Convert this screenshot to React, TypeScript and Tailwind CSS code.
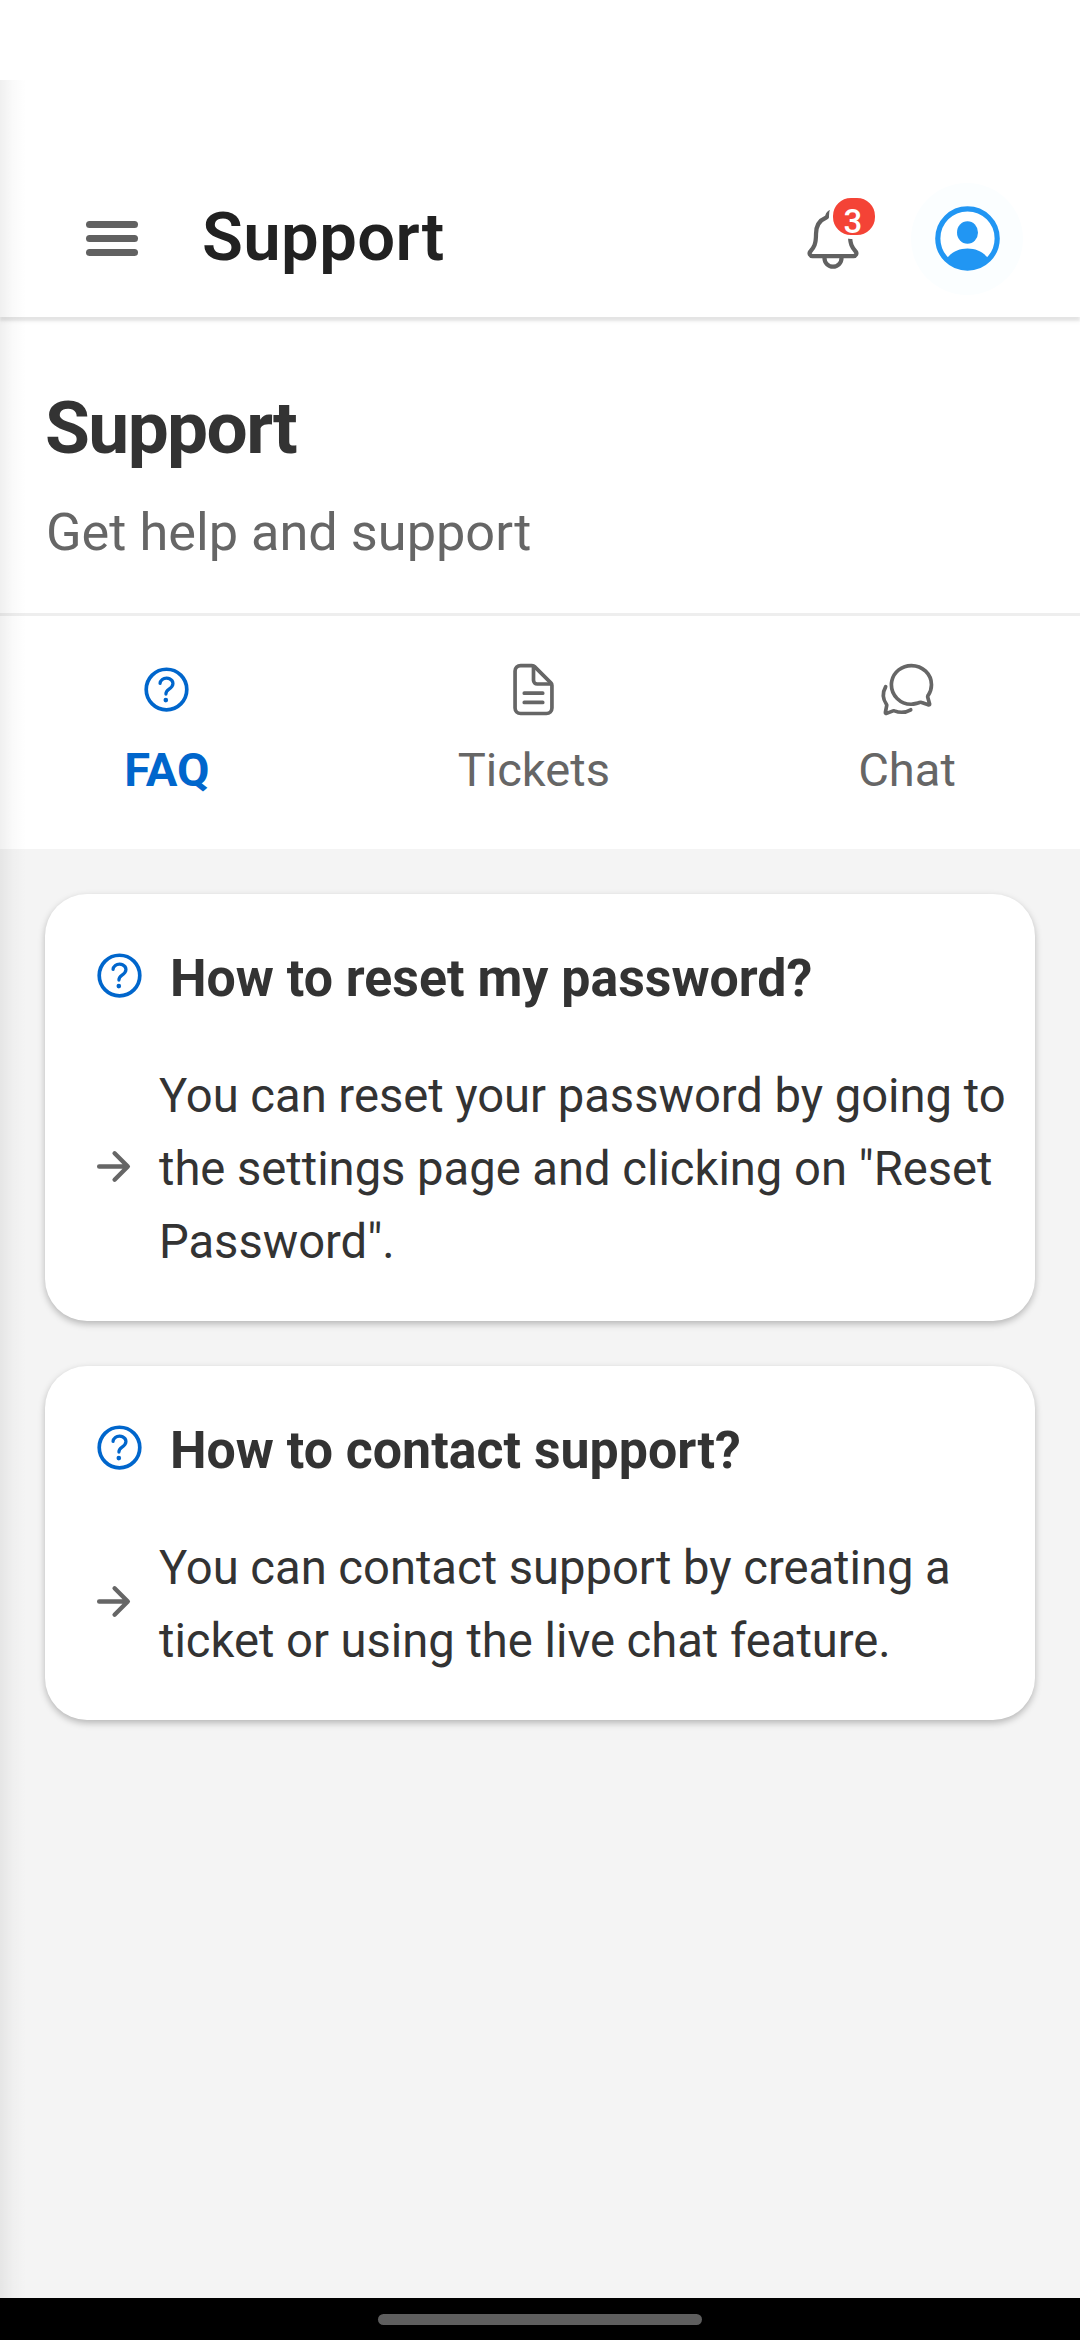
import type { ReactNode } from "react";
import {
  IoArrowForward,
  IoChatbubblesOutline,
  IoDocumentTextOutline,
  IoHelpCircleOutline,
  IoNotificationsOutline,
} from "react-icons/io5";

const faqs = [
  {
    question: "How to reset my password?",
    answer: 'You can reset your password by going to the settings page and clicking on "Reset Password".',
  },
  {
    question: "How to contact support?",
    answer: "You can contact support by creating a ticket or using the live chat feature.",
  },
];

function Tab({ icon, label, active = false }: { icon: ReactNode; label: string; active?: boolean }) {
  return (
    <button
      className={
        active
          ? "flex flex-col items-center gap-[21px] font-bold text-[#0066cc]"
          : "flex flex-col items-center gap-[21px] text-[#666666]"
      }
    >
      {icon}
      <span className="text-[47.1px] leading-[60px]">{label}</span>
    </button>
  );
}

function Header() {
  return (
    <header className="relative z-10 flex h-[237px] items-center bg-white pt-[80px] pl-[86px] pr-[57px] shadow-[0_4px_2px_rgba(0,0,0,0.07),0_5px_5px_rgba(0,0,0,0.04)]">
      <button aria-label="Menu" className="flex w-[52px] flex-col gap-[7px]">
        <span className="h-[6.7px] rounded-full bg-[#616161]" />
        <span className="h-[6.7px] rounded-full bg-[#616161]" />
        <span className="h-[6.7px] rounded-full bg-[#616161]" />
      </button>
      <h1 className="-mt-[3px] ml-[64px] flex-1 text-[67px] leading-[80px] font-semibold tracking-[0.4px] text-[#212121]">
        Support
      </h1>
      <div className="relative mt-px mr-[44px] size-[68px] text-[#616161]">
        <IoNotificationsOutline size={68} />
        <span className="absolute -top-[11px] left-[30px] flex h-[45px] w-[50px] items-center justify-center rounded-[22px] border-4 border-white bg-[#f44336] pt-[9px] pr-[2px] text-[33px] leading-none font-medium text-white">
          3
        </span>
      </div>
      <button aria-label="Profile" className="flex size-[112px] items-center justify-center rounded-full bg-[#fbfeff]">
        <svg width="65" height="65" viewBox="0 0 65 65" className="text-[#2196f3]">
          <circle cx="32.5" cy="32.5" r="29.7" fill="#fff" stroke="currentColor" strokeWidth="5.2" />
          <ellipse cx="32.5" cy="26.5" rx="10.5" ry="11.2" fill="currentColor" />
          <path d="M12 52C17 46 24 42.5 32.5 42.5S48 46 53 52C48 59 41 62.5 32.5 62.5S17 59 12 52Z" fill="currentColor" />
        </svg>
      </button>
    </header>
  );
}

export default function App() {
  return (
    <div className="flex h-[2340px] w-[1080px] flex-col overflow-hidden bg-white font-[Roboto,sans-serif]">
      <div className="h-[80px]" />
      <div className="relative flex flex-1 flex-col bg-[#f4f4f4]">
        <Header />
        <section className="h-[299px] border-b-[3px] border-[#eeeeee] bg-white px-[45px] pt-[66px]">
          <h2 className="text-[73px] leading-[90px] font-bold tracking-[-1.6px] text-[#333333]">Support</h2>
          <p className="mt-[24px] ml-px text-[52.3px] leading-[70px] text-[#666666]">Get help and support</p>
        </section>
        <nav className="flex h-[233px] justify-around bg-white pt-[44px]">
          <Tab active icon={<IoHelpCircleOutline size={59} />} label="FAQ" />
          <Tab icon={<IoDocumentTextOutline size={59} />} label="Tickets" />
          <Tab icon={<IoChatbubblesOutline size={59} />} label="Chat" />
        </nav>
        <main className="flex flex-1 flex-col gap-[45px] px-[45px] pt-[45px]">
          {faqs.map((faq) => (
            <article
              key={faq.question}
              className="rounded-[42px] bg-white pt-[51px] pr-[20px] pb-[42px] pl-[45px] shadow-[0_3px_7px_rgba(0,0,0,0.26)]"
            >
              <div className="flex h-[68px] items-center">
                <IoHelpCircleOutline size={59} className="-mt-[8px] text-[#0066cc]" />
                <h3 className="ml-[21px] text-[51.85px] leading-[68px] font-bold text-[#333333]">{faq.question}</h3>
              </div>
              <div className="mt-[47px] flex items-center">
                <IoArrowForward size={47} className="-mt-[7px] shrink-0 text-[#666666]" />
                <p className="ml-[22px] text-[47.2px] leading-[73px] tracking-[-0.03px] text-[#333333]">{faq.answer}</p>
              </div>
            </article>
          ))}
        </main>
        <div className="pointer-events-none absolute inset-y-0 left-0 z-20 w-[26px] bg-linear-to-r from-black/6 via-black/2 to-transparent" />
      </div>
      <footer className="flex h-[42px] justify-center bg-black pt-4">
        <div className="h-[11px] w-[324px] rounded-full bg-[#5e5e5e]" />
      </footer>
    </div>
  );
}
